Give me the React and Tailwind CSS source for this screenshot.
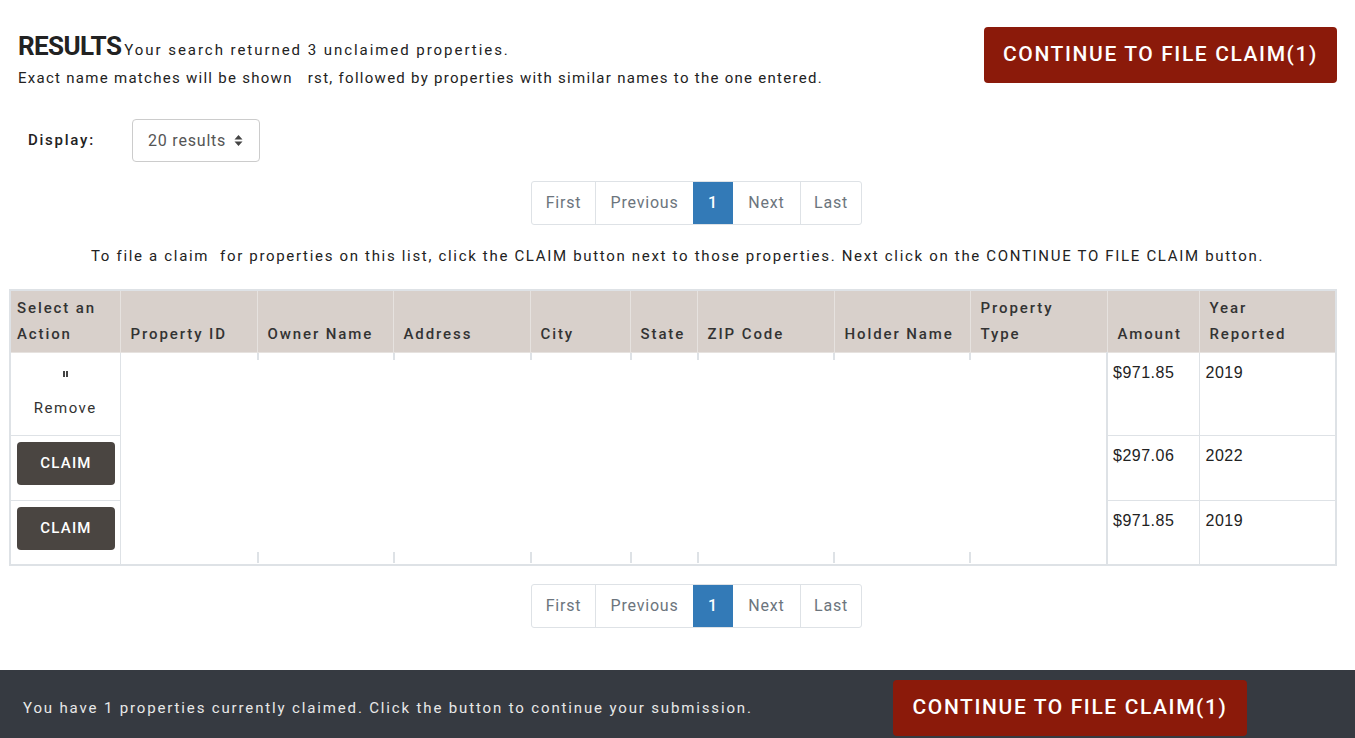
import React from 'react';

const font = { fontFamily: 'Roboto, "Liberation Sans", sans-serif' };
const arial = { fontFamily: '"Liberation Sans", Arial, sans-serif' };

const headers = [
  { label: ['Select an', 'Action'], w: 110, first: true },
  { label: ['Property ID'], w: 137 },
  { label: ['Owner Name'], w: 136 },
  { label: ['Address'], w: 137 },
  { label: ['City'], w: 100 },
  { label: ['State'], w: 67 },
  { label: ['ZIP Code'], w: 137 },
  { label: ['Holder Name'], w: 136 },
  { label: ['Property', 'Type'], w: 137 },
  { label: ['Amount'], w: 92 },
  { label: ['Year', 'Reported'], w: 137 },
];

const middleCols = [137, 136, 137, 100, 67, 137, 136, 137];

const rows = [
  { claimed: true, amount: '$971.85', year: '2019', h: 'h-[83px]' },
  { claimed: false, amount: '$297.06', year: '2022', h: 'h-[65px]' },
  { claimed: false, amount: '$971.85', year: '2019', h: 'h-[64px]' },
];

const Pagination = () => (
  <div className="flex justify-center pl-[38px]">
    <div className="flex h-[44px] border border-[#dee2e6] rounded-[3px] text-[16px] tracking-[0.8px] text-[#6c757d]">
      <div className="w-[63px] flex items-center justify-center">First</div>
      <div className="w-[98px] flex items-center justify-center border-l border-[#dee2e6]">Previous</div>
      <div className="w-[40px] flex items-center justify-center bg-[#337ab7] text-white font-medium">1</div>
      <div className="w-[67px] flex items-center justify-center">Next</div>
      <div className="w-[61px] flex items-center justify-center border-l border-[#dee2e6]">Last</div>
    </div>
  </div>
);

const ContinueButton = ({ className }) => (
  <button className={`bg-[#8b1a0a] text-white rounded-[4px] text-[21px] font-medium tracking-[1.6px] ${className}`}>
    CONTINUE TO FILE CLAIM(1)
  </button>
);

export default function App() {
  return (
    <div className="min-h-screen bg-white text-[#222]" style={font}>
      {/* Top */}
      <div className="flex justify-between pl-[18px] pr-[18px] pt-[27px]">
        <div className="pt-[5px]">
          <div className="flex items-baseline">
            <span className="text-[26px] font-bold tracking-[-0.6px] text-[#222] leading-[28px]">RESULTS</span>
            <span className="text-[15px] tracking-[1.95px] ml-[3px]">Your search returned 3 unclaimed properties.</span>
          </div>
          <div className="text-[15px] tracking-[1.28px] mt-[5px]">
            Exact name matches will be shown{'\u00a0\u00a0\u00a0'}rst, followed by properties with similar names to the one entered.
          </div>
        </div>
        <ContinueButton className="w-[353px] h-[56px]" />
      </div>

      {/* Display */}
      <div className="flex items-center mt-[30px] pl-[28px]">
        <span className="text-[15px] font-medium tracking-[1.75px] w-[104px]">Display:</span>
        <div className="w-[128px] h-[43px] border border-[#ccc] rounded-[4px] flex items-center pl-[15px] gap-[8px] text-[16px] text-[#555] tracking-[0.8px]">
          20 results
          <svg width="9" height="13" viewBox="0 0 9 13" className="text-[#444]">
            <path d="M4.5 1 L8.5 5.5 H0.5 Z M4.5 12 L8.5 7.5 H0.5 Z" fill="currentColor" />
          </svg>
        </div>
      </div>

      <div className="mt-[19px]">
        <Pagination />
      </div>

      <div className="text-center text-[15px] tracking-[1.68px] mt-[20px] font-normal">
        To file a claim{'\u00a0 '}for properties on this list, click the CLAIM button next to those properties. Next click on the CONTINUE TO FILE CLAIM button.
      </div>

      {/* Table */}
      <div className="px-[9px] mt-[21px]">
        <table className="table-fixed border-collapse border-2 border-[#dee2e6] w-[1327px]">
          <colgroup>
            {headers.map((h, i) => (
              <col key={i} style={{ width: h.w }} />
            ))}
          </colgroup>
          <thead>
            <tr className="bg-[#d8d0cb] h-[63px]">
              {headers.map((h, i) => (
                <th
                  key={i}
                  className={`border border-[#e6e2df] align-bottom text-left font-medium text-[15px] tracking-[1.9px] text-[#333] leading-[26px] pb-[5px] whitespace-nowrap ${h.first ? 'pl-[6px]' : 'pl-[10px]'}`}
                >
                  {h.label.map((l, j) => (
                    <div key={j}>{l}</div>
                  ))}
                </th>
              ))}
            </tr>
          </thead>
          <tbody>
            {rows.map((r, i) => (
              <tr key={i} className={r.h}>
                <td className={`border border-[#dee2e6] px-[6px] ${r.claimed ? 'align-middle' : 'align-top pt-[6px]'}`}>
                  {r.claimed ? (
                    <div className="flex flex-col items-center pt-[2px]">
                      <div className="flex gap-[1px] h-[6px]">
                        <span className="w-[2px] h-[6px] bg-[#444]" />
                        <span className="w-[2px] h-[6px] bg-[#444]" />
                      </div>
                      <span className="text-[15px] tracking-[1.5px] text-[#333] mt-[20px]">Remove</span>
                    </div>
                  ) : (
                    <button className="w-[98px] h-[43px] bg-[#4a4541] rounded-[4px] text-white text-[15px] font-medium tracking-[1.2px]">
                      CLAIM
                    </button>
                  )}
                </td>
                {i === 0 && (
                  <td rowSpan={3} colSpan={8} className="border-l border-r-2 border-[#dee2e6] p-0 align-top">
                    <div className="flex flex-col h-[210px]">
                      <div className="flex h-[7px]">
                        {middleCols.map((w, k) => (
                          <div key={k} style={{ width: w }} className={k ? 'border-l-2 border-[#dee2e6]' : ''} />
                        ))}
                      </div>
                      <div className="flex-1" />
                      <div className="flex h-[11px]">
                        {middleCols.map((w, k) => (
                          <div key={k} style={{ width: w }} className={k ? 'border-l-2 border-[#dee2e6]' : ''} />
                        ))}
                      </div>
                    </div>
                  </td>
                )}
                <td className="border border-l-2 border-[#dee2e6] align-top pl-[5px] pt-[8px] text-[16px] tracking-[0.5px] text-[#222]" style={arial}>
                  {r.amount}
                </td>
                <td className="border border-[#dee2e6] align-top pl-[6px] pt-[8px] text-[16px] tracking-[0.5px] text-[#222]" style={arial}>
                  {r.year}
                </td>
              </tr>
            ))}
          </tbody>
        </table>
      </div>

      <div className="mt-[18px]">
        <Pagination />
      </div>

      {/* Footer */}
      <div className="mt-[42px] bg-[#363a41] h-[76px] flex items-start pl-[23px] pt-[10px]">
        <span className="text-[15px] tracking-[1.85px] text-[#e8e8e8] mt-[17px] w-[870px]">
          You have 1 properties currently claimed. Click the button to continue your submission.
        </span>
        <ContinueButton className="w-[354px] h-[56px]" />
      </div>
    </div>
  );
}
